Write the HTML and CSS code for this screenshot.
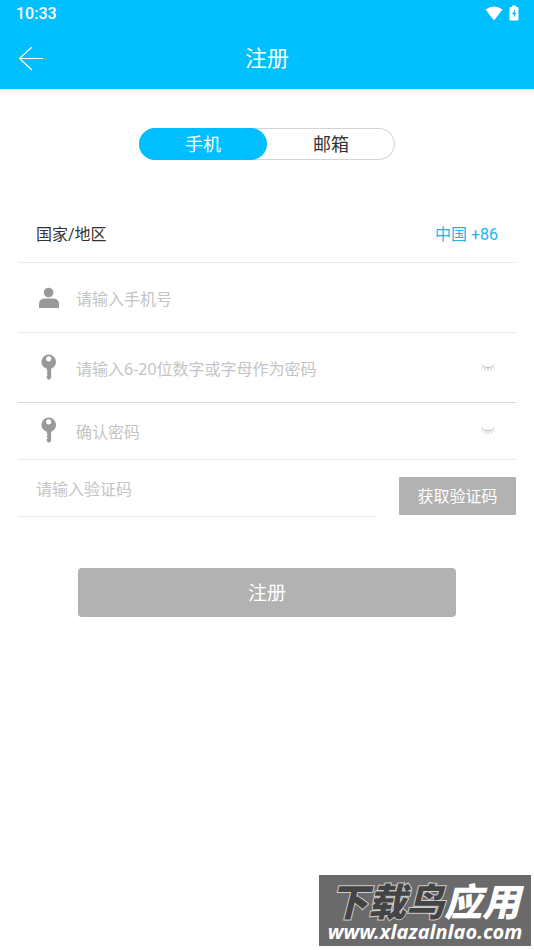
FILE: index.html
```html
<!DOCTYPE html>
<html lang="zh-CN">
<head>
<meta charset="utf-8">
<meta name="viewport" content="width=device-width, initial-scale=1">
<title>注册</title>
<link rel="stylesheet" href="styles.css">
</head>
<body>
<header class="header">
  <div class="status">
    <span>10:33</span>
    <span class="status-icons">
      <svg width="18" height="15" viewBox="0 0 18 15" aria-hidden="true"><path d="M0.500 3.500Q9-2.500 17.500 3.500L9 14.500Z" fill="#fff"/></svg>
      <svg width="10" height="16" viewBox="0 0 10 16" aria-hidden="true"><path d="M3 0.500h4v1.500h1.500q1 0 1 1v11.500q0 1-1 1h-7q-1 0-1-1V3q0-1 1-1H3z" fill="#fff"/><path d="M6.200 4L3 9h1.700v4L7.200 8H5.600z" fill="#00bfff"/></svg>
    </span>
  </div>
  <div class="title-bar">
    <button class="back" type="button" aria-label="返回">
      <svg width="26" height="26" viewBox="0 0 26 26" aria-hidden="true"><path d="M14 1L1.500 12.500L14 24M1.500 12.500H25" fill="none" stroke="#fff" stroke-width="1.200"/></svg>
    </button>
    <h1 class="title">注册</h1>
  </div>
</header>
<main class="main">
  <div class="tabs">
    <button class="tab tab-active" type="button">手机</button>
    <button class="tab" type="button">邮箱</button>
  </div>
  <form class="form">
    <div class="row row-region">
      <span>国家/地区</span>
      <button class="region" type="button">中国 +86</button>
    </div>
    <div class="row row-tall">
      <label class="row-icon" for="phone" aria-label="手机号">
        <svg width="26" height="28" viewBox="0 0 26 28" aria-hidden="true"><g fill="#999"><circle cx="12.600" cy="8.500" r="4.800"/><path d="M3 24v-4q0-5.500 6-5.500h8q6 0 6 5.500v4z"/></g></svg>
      </label>
      <input class="field" id="phone" type="tel" placeholder="请输入手机号">
    </div>
    <div class="row row-tall row-dark">
      <label class="row-icon" for="password" aria-label="密码">
        <svg width="26" height="28" viewBox="0 0 26 28" aria-hidden="true"><path fill="#999" fill-rule="evenodd" d="M12.700 0.500a7.300 7.300 0 0 1 7.300 7.300q0 4.800-4.900 7V23.800l-1.300 1.700h-1.800l-1.200-1.500v-1.900l1-1-1-1v-1.400l1-1-1-1v-1.900Q5.400 12.600 5.400 7.800a7.300 7.300 0 0 1 7.300-7.300zM12.700 2.200a2.600 2.600 0 1 0 0 5.200 2.600 2.600 0 0 0 0-5.200z"/></svg>
      </label>
      <input class="field" id="password" type="password" placeholder="请输入6-20位数字或字母作为密码">
      <button class="eye" type="button" aria-label="显示密码">
        <svg width="14" height="10" viewBox="0 0 14 10" aria-hidden="true"><path d="M0.700 1.500Q2.500 4.700 7 4.700T13.300 1.500M2.400 3.500L0.800 5.500M4.500 4.500L3.800 7.500M7 4.700V8.500M9.500 4.500L10.200 7.500M11.600 3.500L13.300 5.500" fill="none" stroke="#bbb" stroke-width="0.900"/></svg>
      </button>
    </div>
    <div class="row">
      <label class="row-icon" for="confirm" aria-label="确认密码">
        <svg width="26" height="28" viewBox="0 0 26 28" aria-hidden="true"><path fill="#999" fill-rule="evenodd" d="M12.700 0.500a7.300 7.300 0 0 1 7.300 7.300q0 4.800-4.900 7V23.800l-1.300 1.700h-1.800l-1.200-1.500v-1.900l1-1-1-1v-1.400l1-1-1-1v-1.900Q5.400 12.600 5.400 7.800a7.300 7.300 0 0 1 7.300-7.300zM12.700 2.200a2.600 2.600 0 1 0 0 5.200 2.600 2.600 0 0 0 0-5.200z"/></svg>
      </label>
      <input class="field" id="confirm" type="password" placeholder="确认密码">
      <button class="eye" type="button" aria-label="显示密码">
        <svg width="14" height="10" viewBox="0 0 14 10" aria-hidden="true"><path d="M0.700 1.500Q2.500 4.700 7 4.700T13.300 1.500M2.400 3.500L0.800 5.500M4.500 4.500L3.800 7.500M7 4.700V8.500M9.500 4.500L10.200 7.500M11.600 3.500L13.300 5.500" fill="none" stroke="#bbb" stroke-width="0.900"/></svg>
      </button>
    </div>
    <div class="code-row">
      <div class="row row-code">
        <input class="field" type="text" aria-label="验证码" placeholder="请输入验证码">
      </div>
      <button class="get-code" type="button">获取验证码</button>
    </div>
    <button class="submit" type="submit">注册</button>
  </form>
</main>
<aside class="mark">
  <div class="mark-name"><span class="mark-dark">下载鸟</span><span>应用</span></div>
  <div class="mark-url">www.xlazalnlao.com</div>
</aside>
</body>
</html>
```
FILE: styles.css
```css
* {
  box-sizing: border-box;
}

body {
  margin: 0;
  min-height: 100vh;
  position: relative;
  background: #fff;
  color: #333;
  font: 16px/24px Roboto, "Noto Sans CJK SC", sans-serif;
}

button,
input {
  margin: 0;
  padding: 0;
  border: 0;
  background: none;
  color: inherit;
  font: inherit;
}

svg {
  display: block;
}

.header {
  background: #00bfff;
  color: #fff;
}

.status {
  display: flex;
  justify-content: space-between;
  align-items: center;
  height: 28px;
  padding: 0 15px 0 16px;
  font-weight: 500;
}

.status-icons {
  display: flex;
  align-items: center;
  gap: 6px;
  padding-bottom: 2px;
}

.title-bar {
  display: grid;
  grid-template-columns: 1fr auto 1fr;
  align-items: center;
  height: 61px;
  padding: 0 18px;
}

.back {
  justify-self: start;
}

.title {
  margin: 0;
  font-size: 22px;
  font-weight: 400;
  line-height: 32px;
}

.main {
  padding: 39px 18px 0;
}

.tabs {
  display: flex;
  width: 256px;
  height: 32px;
  margin: 0 auto;
  border-radius: 16px;
  box-shadow: inset 0 0 0 1px #d4d4d4;
  font-size: 18px;
}

.tab {
  flex: 1;
  padding-top: 2px;
  border-radius: 16px;
}

.tab-active {
  background: #00bfff;
  color: #fff;
}

.form {
  padding-top: 46px;
}

.row {
  display: flex;
  align-items: center;
  height: 57px;
  padding: 0 18px;
  border-bottom: 1px solid #e8e8e8;
}

.row-region {
  justify-content: space-between;
  padding-top: 2px;
}

.row-tall {
  height: 70px;
}

.row-dark {
  border-color: #d8d8d8;
}

.region {
  color: #1eb4ea;
}

.row-icon {
  flex: none;
  width: 40px;
}

.field {
  flex: 1;
  min-width: 0;
  height: 32px;
  padding-top: 2px;
  outline: none;
  font-family: "Noto Sans", "Noto Sans CJK SC", sans-serif;
}

.field::placeholder {
  color: #c4c4c4;
  opacity: 1;
}

.eye {
  margin-right: 3px;
}

.code-row {
  display: flex;
  align-items: flex-end;
  gap: 22px;
}

.row-code {
  flex: 1;
}

.get-code {
  width: 117px;
  height: 38px;
  margin-bottom: 2px;
  padding-top: 2px;
  background: #b2b2b2;
  color: #fff;
}

.submit {
  display: block;
  width: calc(100% - 120px);
  height: 49px;
  margin: 51px auto 0;
  padding-top: 2px;
  border-radius: 4px;
  background: #b2b2b2;
  color: #fff;
  font-size: 19px;
}

.mark {
  position: absolute;
  right: 3px;
  bottom: 4px;
  width: 212px;
  height: 71px;
  padding: 6px 5px 0;
  background: #6a6a6a;
  color: #fff;
  font-style: italic;
  text-align: center;
  white-space: nowrap;
}

.mark-name {
  font-family: "Noto Sans CJK SC", sans-serif;
  font-size: 38px;
  font-weight: 900;
  line-height: 38px;
}

.mark-dark {
  color: #444;
  -webkit-text-stroke: 2px #ccc;
  paint-order: stroke fill;
}

.mark-url {
  font-family: "Noto Sans", sans-serif;
  font-size: 20px;
  font-weight: 700;
  line-height: 26px;
}
```
